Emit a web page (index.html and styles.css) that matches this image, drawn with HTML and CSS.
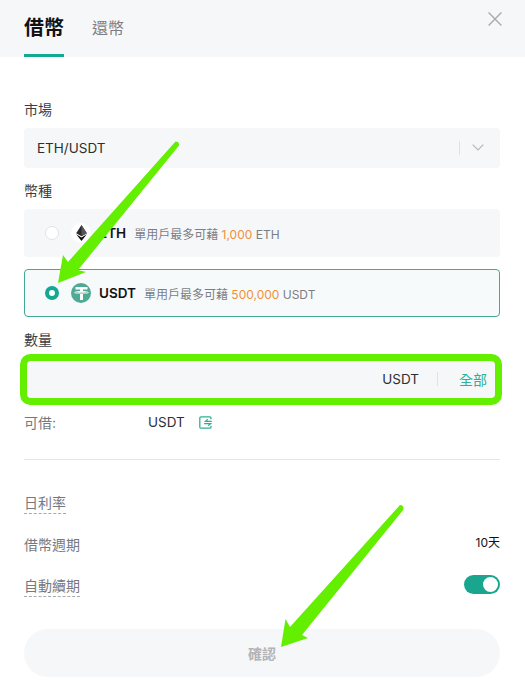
FILE: index.html
```html
<!DOCTYPE html>
<html lang="zh-Hant">
<head>
<meta charset="utf-8">
<title>借幣</title>
<link rel="stylesheet" href="styles.css">
</head>
<body>
<div class="page">
  <header class="tabs">
    <div class="tab tab-active">借幣</div>
    <div class="tab">還幣</div>
    <svg class="close" width="14" height="14" viewBox="0 0 14 14"><path d="M.6.6l12.8 12.8M13.4.6L.6 13.4" fill="none" stroke="#a9abae" stroke-width="1.4"/></svg>
  </header>
  <main class="form">
    <div class="label label-first">市場</div>
    <div class="select">
      <span class="select-value">ETH/USDT</span>
      <span class="vline"></span>
      <svg width="12" height="7" viewBox="0 0 12 7"><path d="M.7.7L6 6l5.300-5.300" fill="none" stroke="#b4b7bb" stroke-width="1.200"/></svg>
    </div>
    <div class="label">幣種</div>
    <div class="coin">
      <span class="radio"></span>
      <span class="coin-icon coin-eth">
        <svg width="11" height="16" viewBox="0 0 12 18"><path d="M6 0L0 9.200 6 12.600l6-3.400z" fill="#2b2b2f"/><path d="M0 10.500L6 18l6-7.500-6 3.500z" fill="#111"/><path d="M6 0v12.600l6-3.400z" fill="#55565a"/></svg>
      </span>
      <span class="coin-name">ETH</span>
      <span class="coin-desc">單用戶最多可藉 <em>1,000</em> ETH</span>
    </div>
    <div class="coin coin-selected">
      <span class="radio radio-on"></span>
      <span class="coin-icon coin-usdt">
        <svg width="15" height="13" viewBox="0 0 15 13"><path d="M1.500 0h12v2.600H9v1.500c3.200.1 5.800.7 5.800 1.400S12.200 6.800 9 6.900V13H6V6.900C2.800 6.800.2 6.200.2 5.500S2.800 4.200 6 4.100V2.600H1.500z" fill="#fff"/><path d="M1.500 5.300c.8.600 3.200.9 6 .9s5.200-.3 6-.9" fill="none" stroke="#50a994" stroke-width=".8"/></svg>
      </span>
      <span class="coin-name">USDT</span>
      <span class="coin-desc">單用戶最多可藉 <em>500,000</em> USDT</span>
    </div>
    <div class="label">數量</div>
    <div class="amount">
      <span class="amount-unit">USDT</span>
      <span class="vline"></span>
      <span class="amount-all">全部</span>
    </div>
    <div class="avail">
      <span class="avail-label">可借:</span>
      <span class="avail-value">USDT</span>
      <svg width="13" height="13" viewBox="0 0 13 13"><path d="M12 3.200V2a1.200 1.200 0 0 0-1.200-1.200H2A1.200 1.200 0 0 0 .8 2v9A1.200 1.200 0 0 0 2 12.200h8.800A1.200 1.200 0 0 0 12 11V10" fill="none" stroke="#2fb096" stroke-width="1.300"/><path d="M8.800 3.200L6.500 5.300h6.300M5 7.700h6.500L9.200 9.800" fill="none" stroke="#2fb096" stroke-width="1.200"/></svg>
    </div>
    <hr class="divider">
    <div class="row row-first"><span class="key key-dashed">日利率</span></div>
    <div class="row"><span class="key">借幣週期</span><span class="val">10天</span></div>
    <div class="row row-last">
      <span class="key key-dashed">自動續期</span>
      <span class="toggle"><span class="knob"></span></span>
    </div>
    <button class="confirm" type="button">確認</button>
  </main>
  <svg class="arrows" width="525" height="695" viewBox="0 0 525 695">
    <path d="M175.500 141.500Q179.500 141.500 179 145.500L78 270 86 272 58 283 63 255 68 262Z" fill="#64ee00"/>
    <path d="M400 505Q404 505 403.500 509.500L302 635 308 638 281 647 285.500 619 290 627Z" fill="#64ee00"/>
  </svg>
</div>
</body>
</html>
```

FILE: styles.css
```css
* { box-sizing: border-box; }
html, body { margin: 0; padding: 0; background: #fff; }
body {
  font-family: Inter, "Noto Sans CJK TC", sans-serif;
  color: #121214;
}
.page {
  position: relative;
  width: 525px;
  height: 695px;
  overflow: hidden;
}
.tabs {
  position: relative;
  display: flex;
  gap: 28px;
  height: 57px;
  padding: 0 24px;
  background: #f6f7f9;
}
.tab {
  height: 57px;
  padding-top: 14px;
  font-size: 16px;
  line-height: 28px;
  color: #7b7e84;
}
.tab-active {
  width: 40px;
  font-size: 20px;
  font-weight: 700;
  color: #121214;
  border-bottom: 3px solid #13a892;
}
.close {
  position: absolute;
  top: 12px;
  right: 23px;
}
.form {
  display: flex;
  flex-direction: column;
  padding: 0 25px 0 24px;
}
.label {
  height: 20px;
  margin: 13px 0 8px;
  font-size: 14px;
  line-height: 20px;
  color: #3c3e43;
}
.label-first { margin-top: 43px; }
.select {
  display: flex;
  align-items: center;
  height: 40px;
  padding: 0 16px 1px 13px;
  background: #f6f7f9;
  border-radius: 4px;
  font-size: 13.500px;
  color: #2c2e33;
}
.select-value { flex: 1; }
.vline {
  width: 1px;
  height: 14px;
  margin-right: 12px;
  background: #dfe1e4;
}
.coin {
  display: flex;
  align-items: center;
  height: 48px;
  padding-left: 21px;
  background: #f6f7f9;
  border-radius: 4px;
}
.coin-selected {
  margin-top: 12px;
  padding-left: 20px;
  background: #f7fafa;
  border: 1px solid #43a996;
}
.radio {
  width: 14px;
  height: 14px;
  border: 1px solid #e2e3e6;
  border-radius: 50%;
  background: #fff;
}
.radio-on {
  border: 4.500px solid #13a892;
}
.coin-icon {
  display: flex;
  align-items: center;
  justify-content: center;
  width: 20px;
  height: 20px;
  margin: 0 8px 0 12px;
  border-radius: 50%;
}
.coin-eth { background: #fff; }
.coin-usdt { background: #50a994; }
.coin-name {
  margin-right: 8px;
  font-size: 13.500px;
  font-weight: 600;
}
.coin-desc {
  font-size: 12px;
  color: #7b7e84;
}
.coin-desc em {
  font-style: normal;
  color: #f0903c;
}
.amount {
  display: flex;
  align-items: center;
  justify-content: flex-end;
  height: 37px;
  margin: 3px 5px 0 3px;
  padding: 0 8px 1px 0;
  background: #f6f7f9;
  border-radius: 4px;
  box-shadow: 0 0 0 7px #64ee00;
  font-size: 13.500px;
}
.amount-unit {
  margin-right: 18px;
  color: #2c2e33;
}
.amount .vline { margin-right: 21px; }
.amount-all {
  font-size: 14px;
  color: #2fb096;
}
.avail {
  display: flex;
  align-items: center;
  height: 20px;
  margin-top: 14px;
  font-size: 13.500px;
}
.avail-label {
  width: 124px;
  font-size: 14px;
  color: #75797f;
}
.avail-value {
  margin-right: 14px;
  color: #2c2e33;
}
.divider {
  width: 100%;
  height: 1px;
  margin: 27px 0 0;
  border: 0;
  background: #e5e6e8;
}
.row {
  display: flex;
  align-items: flex-start;
  justify-content: space-between;
  height: 20px;
  margin-top: 22px;
  font-size: 14px;
  line-height: 20px;
}
.row-first { margin-top: 33px; }
.row-last { margin-top: 21px; }
.key { color: #75797f; }
.key-dashed {
  height: 21px;
  border-bottom: 1px dashed #a6a8ac;
}
.val {
  margin-top: -2px;
  font-size: 12px;
  color: #121214;
}
.toggle {
  display: flex;
  align-items: center;
  justify-content: flex-end;
  width: 36px;
  height: 19px;
  margin-top: -1px;
  padding-right: 2px;
  background: #1aa58f;
  border-radius: 10px;
}
.knob {
  width: 15px;
  height: 15px;
  background: #fff;
  border-radius: 50%;
}
.confirm {
  height: 48px;
  margin-top: 33px;
  border: 0;
  border-radius: 24px;
  background: #f6f7f9;
  font: 700 14px Inter, "Noto Sans CJK TC", sans-serif;
  color: #b2b4b8;
}
.arrows {
  position: absolute;
  top: 0;
  left: 0;
  pointer-events: none;
}
```
